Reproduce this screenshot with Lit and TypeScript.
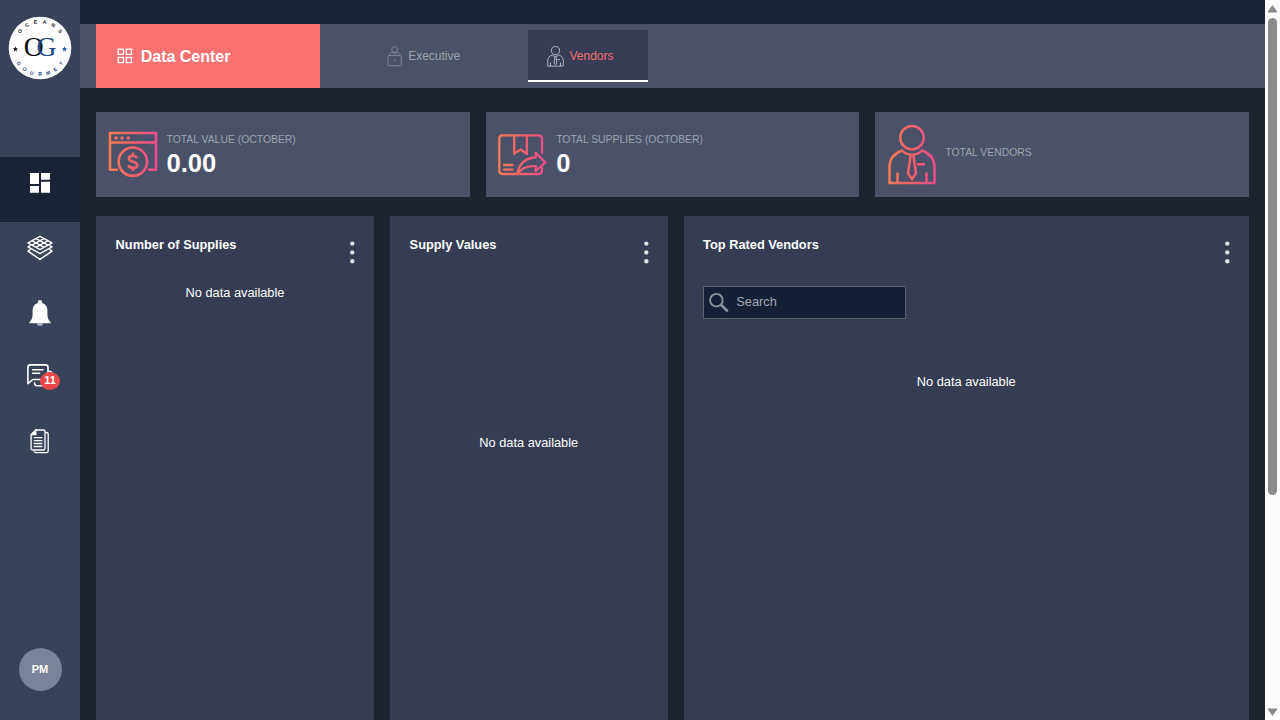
import { LitElement, html, svg, css } from "lit";
import { customElement } from "lit/decorators.js";

const gradient = (id: string, width: number) => svg`
  <defs>
    <linearGradient id=${id} gradientUnits="userSpaceOnUse" x1="0" y1="0" x2=${width} y2="0">
      <stop offset="0" stop-color="#f67d55"></stop>
      <stop offset="0.5" stop-color="#f2606b"></stop>
      <stop offset="1" stop-color="#ec4b8c"></stop>
    </linearGradient>
  </defs>`;

/* Places each letter of a word around the badge centre, in degrees clockwise from the top. */
const ringText = (word: string, from: number, step: number, radius: number, color: string, inward: boolean) =>
  [...word].map((ch, i) => {
    const a = from + step * i;
    const r = (a * Math.PI) / 180;
    const x = 32 + Math.sin(r) * radius;
    const y = 32 - Math.cos(r) * radius;
    return svg`<text transform="translate(${x} ${y}) rotate(${inward ? a - 180 : a})" y="1.7"
      text-anchor="middle" font-family="Liberation Sans, sans-serif" font-size="5" font-weight="700" fill=${color}>${ch}</text>`;
  });

const star = (x: number, color: string) => svg`
  <path transform="translate(${x} 33.200)" fill=${color}
    d="M0-2.8 .75-.9 2.7-.85 1.15.35 1.7 2.3 0 1.15-1.7 2.3-1.15.35-2.7-.85-.75-.9Z"></path>`;

const logo = html`<svg class="logo" width="64" height="64" viewBox="0 0 64 64">
  <circle cx="32" cy="32" r="31.3" fill="#fff"></circle>
  ${ringText("OCEANS", -50, 20, 26.3, "#16181f", false)}
  ${ringText("GOURMET", 234, -18, 26.3, "#1d447c", true)}
  ${star(7.4, "#111")}${star(56.5, "#1f4e8f")}
  <text x="15.800" y="39.500" font-family="Liberation Serif, serif" font-size="27.500" fill="#0d0e12">O</text>
  <text x="28.400" y="39.500" font-family="Liberation Serif, serif" font-size="27.500" fill="#1f4a86">G</text>
</svg>`;

const dashboardIcon = html`<svg width="20" height="20" viewBox="0 0 20 20" fill="#fff">
  <path d="M0 0h9v11H0zM11 0h9v6.7h-9zM0 13h9v6.700H0zM11 8.800h9V19.700h-9z"></path>
</svg>`;

const layersIcon = html`<svg width="26" height="26" viewBox="0 0 26 26" fill="none" stroke="#fff" stroke-width="1.500" stroke-linejoin="round">
  <path d="M13 1.400 25 7.800 13 14.600 1 7.800Z"></path>
  <path d="M9 3.600 21 10.100M5 5.700 17 12.300M17 3.600 5 10.100M21 5.700 9 12.300"></path>
  <path d="M3.500 10.300 1 11.900 13 18.600 25 11.900 22.500 10.300"></path>
  <path d="M3.500 14.300 1 16.200 13 24.300 25 16.200 22.500 14.300"></path>
</svg>`;

const bellIcon = html`<svg width="22" height="26" viewBox="0 0 22 26">
  <path d="M7.500 23.400h7c-.6 1.500-2 2.300-3.500 2.300s-2.900-.8-3.500-2.300Z" fill="#b9bdc9"></path>
  <path fill="#fff" d="M11 0c1.200 0 2.100.9 2.100 2.100v.9c3.300 1 5.300 3.700 5.300 7v4.200c0 3.300.7 5.600 3 7.800.5.600.2 1.300-.6 1.300H1.200c-.8 0-1.100-.7-.6-1.300 2.300-2.200 3-4.500 3-7.800V10c0-3.300 2-6 5.300-7v-.9C8.900.9 9.800 0 11 0Z"></path>
</svg>`;

const chatIcon = html`<svg width="28" height="24" viewBox="0 0 28 24" fill="none" stroke="#fff" stroke-width="1.600" stroke-linecap="round" stroke-linejoin="round">
  <path d="M3.500.900H18.500c1.500 0 2.500 1 2.500 2.500V13c0 1.500-1 2.500-2.500 2.500H5.800L.900 19.700V3.500C.900 2 2 .900 3.500.900Z"></path>
  <path d="M5.700 5.800H16M5.700 9.300H12.700"></path>
  <path d="M22.600 7.300c1.500.1 2.300 1 2.300 2.400V22l-3-.3H10c-1.600 0-2.400-.8-2.500-3"></path>
</svg>`;

const docsIcon = html`<svg width="20" height="25" viewBox="0 0 20 25" fill="none" stroke="#fff" stroke-width="1.300" stroke-linejoin="round">
  <path d="M5.800 1H13.500c.9 0 1.500.6 1.500 1.500V19.500c0 .9-.6 1.500-1.500 1.500H2.600c-.9 0-1.500-.6-1.500-1.500V5.700Z"></path>
  <path d="M5.800 1V5.700H1.100Z" fill="#fff"></path>
  <path d="M15.300 3.500h1.200c1 0 1.700.6 1.700 1.600V22c0 1-.7 1.700-1.700 1.700H6c-1 0-1.600-.6-1.700-1.500"></path>
  <path d="M3.700 8.600H12.400M3.700 11.600H12.400M3.700 14.500H12.400M3.700 17.500H12.400"></path>
</svg>`;

const gridIcon = html`<svg width="16" height="16" viewBox="0 0 16 16" fill="none" stroke="#fff" stroke-width="1.300">
  <path d="M1.200 1.200h5.200v5.200H1.200zM9.300 1.200h5.200v5.200H9.300zM1.200 9.500h5.200v5.200H1.200zM9.300 9.500h5.200v5.200H9.300z"></path>
</svg>`;

const executiveIcon = html`<svg width="16" height="21" viewBox="0 0 16 21" fill="none" stroke="#7f879c" stroke-width="1">
  <circle cx="7.600" cy="3.600" r="2.900"></circle>
  <path d="M2.200 9.500c.2-1.900 1.400-2.900 3.400-3.200l2 1.600 2-1.600c2 .3 3.200 1.300 3.400 3.200"></path>
  <path d="M1.900 9.600H13.300c.7 0 1.100.4 1.100 1.100L14 16.900l.7.900V18.500c0 .8-.4 1.200-1.200 1.200H1.900c-.8 0-1.200-.4-1.200-1.200V17.800l.7-.9L.8 10.700c0-.7.400-1.100 1.100-1.100Z"></path>
  <circle cx="7.600" cy="14.300" r=".5"></circle>
</svg>`;

const vendorShape = svg`
  <circle cx="24" cy="12.700" r="11.700"></circle>
  <path d="M14 25.500C6 28.500 1.500 34 1.500 42V58H46.500V42C46.500 34 42 28.500 34 25.500C29 31 19 31 14 25.500Z"></path>
  <path d="M9.500 47.500V58M38.500 47.500V58M29 39.200H37"></path>
  <path d="M22.600 30.500 20 48.500 24 54 28 48.500 25.400 30.500"></path>`;

const tabVendorIcon = html`<svg width="17" height="21" viewBox="-.5 -.5 49 61" fill="none" stroke="#b7bbc7" stroke-width="2.800">${vendorShape}</svg>`;

const vendorsIcon = html`<svg width="48" height="60" viewBox="0 0 48 60" fill="none" stroke="url(#gv)" stroke-width="2.500">${gradient("gv", 48)}
  <g>${vendorShape}</g>
</svg>`;

const valueIcon = html`<svg width="49" height="46" viewBox=".5 .5 49 46" fill="none" stroke="url(#gm)" stroke-width="2.600">${gradient("gm", 49)}
  <path d="M9.500 38.200H1.500V1.500H47.500V38.200H39.500M1.500 11H47.500" stroke-linejoin="round"></path>
  <circle cx="24.400" cy="30.200" r="14.200"></circle>
  <g fill="url(#gm)" stroke="none"><circle cx="7.600" cy="6.500" r="1.700"></circle><circle cx="13.600" cy="6.500" r="1.700"></circle><circle cx="19.700" cy="6.500" r="1.700"></circle></g>
  <path d="M28.300 26.800c-.3-1.700-1.900-2.600-3.900-2.600-2.300 0-4 1.100-4 2.900 0 4.200 8.400 1.900 8.400 6.300 0 1.900-1.900 3-4.300 3-2.300 0-4.100-1-4.400-2.900M24.400 21V24.300M24.400 36.300V39.400"></path>
</svg>`;

const suppliesIcon = html`<svg width="49" height="42" viewBox="0 0 49 42" fill="none" stroke="url(#gs)" stroke-width="2.300" stroke-linejoin="round">${gradient("gs", 49)}
  <path d="M44 20V4.500c0-2-1.200-3.200-3.200-3.200H4.500c-2 0-3.200 1.200-3.200 3.200V36.800c0 2 1.200 3.200 3.200 3.200H40.800c2 0 3.200-1.200 3.200-3.200V33"></path>
  <path d="M16.200 1.500V19.800L22.600 15.500 28.900 19.800V1.500M5.200 31H15.500M5.200 35.700H15.500"></path>
  <path d="M19.500 39.800C20.500 30 27.500 23.700 37.700 23.500V18.800L47.500 28.300 37.700 37V32.200C30 31.500 24 33.500 19.500 39.800Z"></path>
</svg>`;

const searchIcon = html`<svg width="20" height="20" viewBox="0 0 20 20" fill="none" stroke="#8b92a1">
  <circle cx="7.400" cy="7.200" r="6.300" stroke-width="1.900"></circle>
  <path d="M11.900 11.700 18.700 18.500" stroke-width="2.600"></path>
</svg>`;

const menuDots = html`<svg class="dots" width="6" height="24" viewBox="0 0 6 24" fill="#dcdee5">
  <circle cx="3.300" cy="3.600" r="2.200"></circle><circle cx="3.300" cy="12.400" r="2.200"></circle><circle cx="3.300" cy="21.200" r="2.200"></circle>
</svg>`;

@customElement("app-root")
export class AppRoot extends LitElement {
  static styles = css`
    :host {
      display: flex;
      width: 1280px;
      height: 720px;
      overflow: hidden;
      background: #1e242e;
      color: #fff;
      font-family: "Liberation Sans", Arial, sans-serif;
      font-size: 12.8px;
    }
    * { box-sizing: border-box; }
    svg { display: block; flex: none; overflow: visible; }
    .side { width: 80px; flex: none; display: flex; flex-direction: column; align-items: center; background: #39425b; }
    .brand { height: 156.500px; padding-top: 16px; }
    .item { width: 80px; height: 64.500px; display: flex; align-items: center; justify-content: center; }
    .item.active { background: #1a2237; padding-bottom: 12px; height: 65px; }
    .item.layers { padding-bottom: 12px; }
    .item.bell { padding-bottom: 10px; }
    .item.docs { padding-bottom: 12px; }
    .item.chat { padding: 0 0 14px 2px; position: relative; }
    .badge {
      position: absolute; left: 40px; top: 21px; width: 20px; height: 18px; border-radius: 50%;
      background: #ea4848; font-size: 11px; font-weight: 700; line-height: 17px; text-align: center;
    }
    .avatar {
      width: 43px; height: 43px; margin: auto 0 29px; border-radius: 50%; background: #7b829b;
      display: flex; align-items: center; justify-content: center; padding-bottom: 2px; font-size: 11px; font-weight: 700;
    }
    .main { flex: 1; min-width: 0; display: flex; flex-direction: column; }
    .top { height: 24px; flex: none; background: #1a2237; }
    .nav { height: 64px; flex: none; display: flex; padding-left: 16px; background: #4a5168; }
    .title { width: 224px; display: flex; align-items: center; gap: 8px; padding-left: 20.700px; background: #f87171; font-size: 16px; font-weight: 700; }
    .title span { padding-top: 2px; }
    .tab { display: flex; align-items: center; height: 52px; margin-top: 6px; font-size: 12px; }
    .tab.exec { width: 208px; padding-left: 67px; gap: 5.200px; color: #9ca3af; }
    .tab.vend { width: 120px; padding: 2px 0 0 18.500px; gap: 6px; color: #f87171; background: #353c54; border-bottom: 2px solid #fff; }
    .stats { display: grid; grid-template-columns: repeat(3, 1fr); gap: 16px; padding: 24px 16px 0; }
    .stat { height: 85px; display: flex; align-items: center; gap: 9px; padding-left: 12.500px; background: #4a5168; }
    .label { font-size: 10.400px; line-height: 14px; padding-top: 2px; color: #9ca3af; }
    .stat .label.alone { padding: 0 0 4px; margin-left: .5px; }
    .number { font-size: 25.600px; line-height: 32px; font-weight: 700; }
    .panels { flex: 1; display: grid; grid-template-columns: 278px 277.500px 1fr; column-gap: 16px; padding: 19px 16px 0; }
    .panel { background: #353c54; padding: 0 19px; }
    .head { height: 60px; display: flex; justify-content: space-between; padding: 20px 0 0 .6px; font-weight: 700; line-height: 17px; }
    .dots { margin-top: 4px; }
    .empty { text-align: center; line-height: 16px; }
    .first { padding-top: 9px; }
    .second { padding-top: 159px; }
    .third { padding-top: 55px; }
    .search {
      width: 203px; height: 33px; margin-top: 10px; display: flex; align-items: center; gap: 7.800px;
      padding: 0 0 2px 5px; border: 1px solid #5d616c; background: #151f37; color: #a3a9b5;
    }
    .search svg { margin-top: 2px; }
    .scroll { width: 15px; flex: none; display: flex; flex-direction: column; align-items: center; background: #fcfcfc; }
    .thumb { width: 9px; height: 477px; margin: 5px 0 auto; border-radius: 4.500px; background: #8b8b8b; }
    .up { margin-top: 4px; }
    .down { margin-bottom: 3px; }
  `;

  render() {
    return html`
      <aside class="side">
        <div class="brand">${logo}</div>
        <div class="item active">${dashboardIcon}</div>
        <div class="item layers">${layersIcon}</div>
        <div class="item bell">${bellIcon}</div>
        <div class="item chat">${chatIcon}<span class="badge">11</span></div>
        <div class="item docs">${docsIcon}</div>
        <div class="avatar">PM</div>
      </aside>
      <main class="main">
        <div class="top"></div>
        <nav class="nav">
          <div class="title">${gridIcon}<span>Data Center</span></div>
          <div class="tab exec">${executiveIcon}<span>Executive</span></div>
          <div class="tab vend">${tabVendorIcon}<span>Vendors</span></div>
        </nav>
        <section class="stats">
          <div class="stat">${valueIcon}<div><div class="label">TOTAL VALUE (OCTOBER)</div><div class="number">0.00</div></div></div>
          <div class="stat">${suppliesIcon}<div><div class="label">TOTAL SUPPLIES (OCTOBER)</div><div class="number">0</div></div></div>
          <div class="stat">${vendorsIcon}<div class="label alone">TOTAL VENDORS</div></div>
        </section>
        <section class="panels">
          <div class="panel"><div class="head">Number of Supplies${menuDots}</div><div class="empty first">No data available</div></div>
          <div class="panel"><div class="head">Supply Values${menuDots}</div><div class="empty second">No data available</div></div>
          <div class="panel">
            <div class="head">Top Rated Vendors${menuDots}</div>
            <div class="search">${searchIcon}<span>Search</span></div>
            <div class="empty third">No data available</div>
          </div>
        </section>
      </main>
      <div class="scroll">
        <svg class="up" width="11" height="9" viewBox="0 0 11 9"><path d="M5.500 1 10.300 7.800Q10.500 8.500 9.700 8.500H1.300Q.500 8.500.700 7.800Z" fill="#8b8b8b"></path></svg>
        <div class="thumb"></div>
        <svg class="down" width="11" height="9" viewBox="0 0 11 9"><path d="M5.500 8 10.300 1.200Q10.500.500 9.700.500H1.300Q.500.500.700 1.200Z" fill="#8b8b8b"></path></svg>
      </div>
    `;
  }
}
